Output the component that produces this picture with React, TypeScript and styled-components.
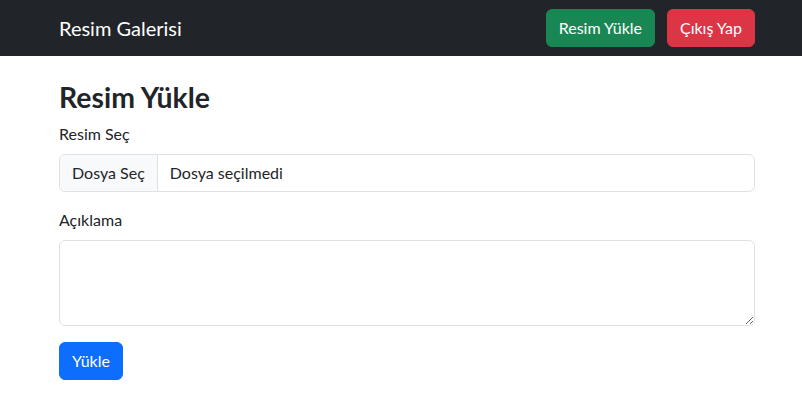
import React from "react";
import styled, { createGlobalStyle } from "styled-components";

const Global = createGlobalStyle`
  * { box-sizing: border-box; }
  body {
    margin: 0;
    font-family: "Lato", "Noto Sans", sans-serif;
    font-size: 16px;
    line-height: 1.5;
    color: #212529;
    background: #fff;
  }
`;

const Navbar = styled.nav`
  background: #212529;
  height: 56px;
  display: flex;
  align-items: center;
`;

const Container = styled.div`
  width: 696px;
  margin-left: 59px;
`;

const NavInner = styled(Container)`
  display: flex;
  align-items: center;
  justify-content: space-between;
`;

const Brand = styled.a`
  color: #fff;
  font-size: 20px;
  line-height: 30px;
  text-decoration: none;
`;

const NavActions = styled.div`
  display: flex;
  gap: 12px;
`;

const Button = styled.button<{ $bg: string }>`
  font-family: inherit;
  font-size: 16px;
  line-height: 24px;
  padding: 6px 12px;
  border: 1px solid ${(p) => p.$bg};
  background: ${(p) => p.$bg};
  color: #fff;
  border-radius: 6px;
  cursor: pointer;
`;

const Main = styled(Container)`
  padding-top: 24px;
`;

const Title = styled.h2`
  margin: 0 0 8px;
  font-size: 28.4px;
  font-weight: 700;
  line-height: 1.2;
`;

const Field = styled.div`
  margin-bottom: 16px;
`;

const Label = styled.label`
  display: block;
  margin-bottom: 8px;
`;

const FileBox = styled.div`
  display: flex;
  height: 38px;
  border: 1px solid #dee2e6;
  border-radius: 6px;
  overflow: hidden;
`;

const FileButton = styled.span`
  display: flex;
  align-items: center;
  padding: 0 12px;
  background: #f8f9fa;
  border-right: 1px solid #dee2e6;
`;

const FileName = styled.span`
  display: flex;
  align-items: center;
  padding: 0 12px;
`;

const TextArea = styled.textarea`
  display: block;
  width: 100%;
  height: 86px;
  padding: 6px 12px;
  font-family: inherit;
  font-size: 16px;
  line-height: 24px;
  border: 1px solid #dee2e6;
  border-radius: 6px;
  resize: vertical;
  color: #212529;
`;

export default function App() {
  return (
    <>
      <Global />
      <Navbar>
        <NavInner>
          <Brand href="#">Resim Galerisi</Brand>
          <NavActions>
            <Button $bg="#198754">Resim Yükle</Button>
            <Button $bg="#dc3545">Çıkış Yap</Button>
          </NavActions>
        </NavInner>
      </Navbar>
      <Main>
        <Title>Resim Yükle</Title>
        <Field>
          <Label>Resim Seç</Label>
          <FileBox>
            <FileButton>Dosya Seç</FileButton>
            <FileName>Dosya seçilmedi</FileName>
          </FileBox>
        </Field>
        <Field>
          <Label>Açıklama</Label>
          <TextArea rows={3} />
        </Field>
        <Button $bg="#0d6efd">Yükle</Button>
      </Main>
    </>
  );
}
